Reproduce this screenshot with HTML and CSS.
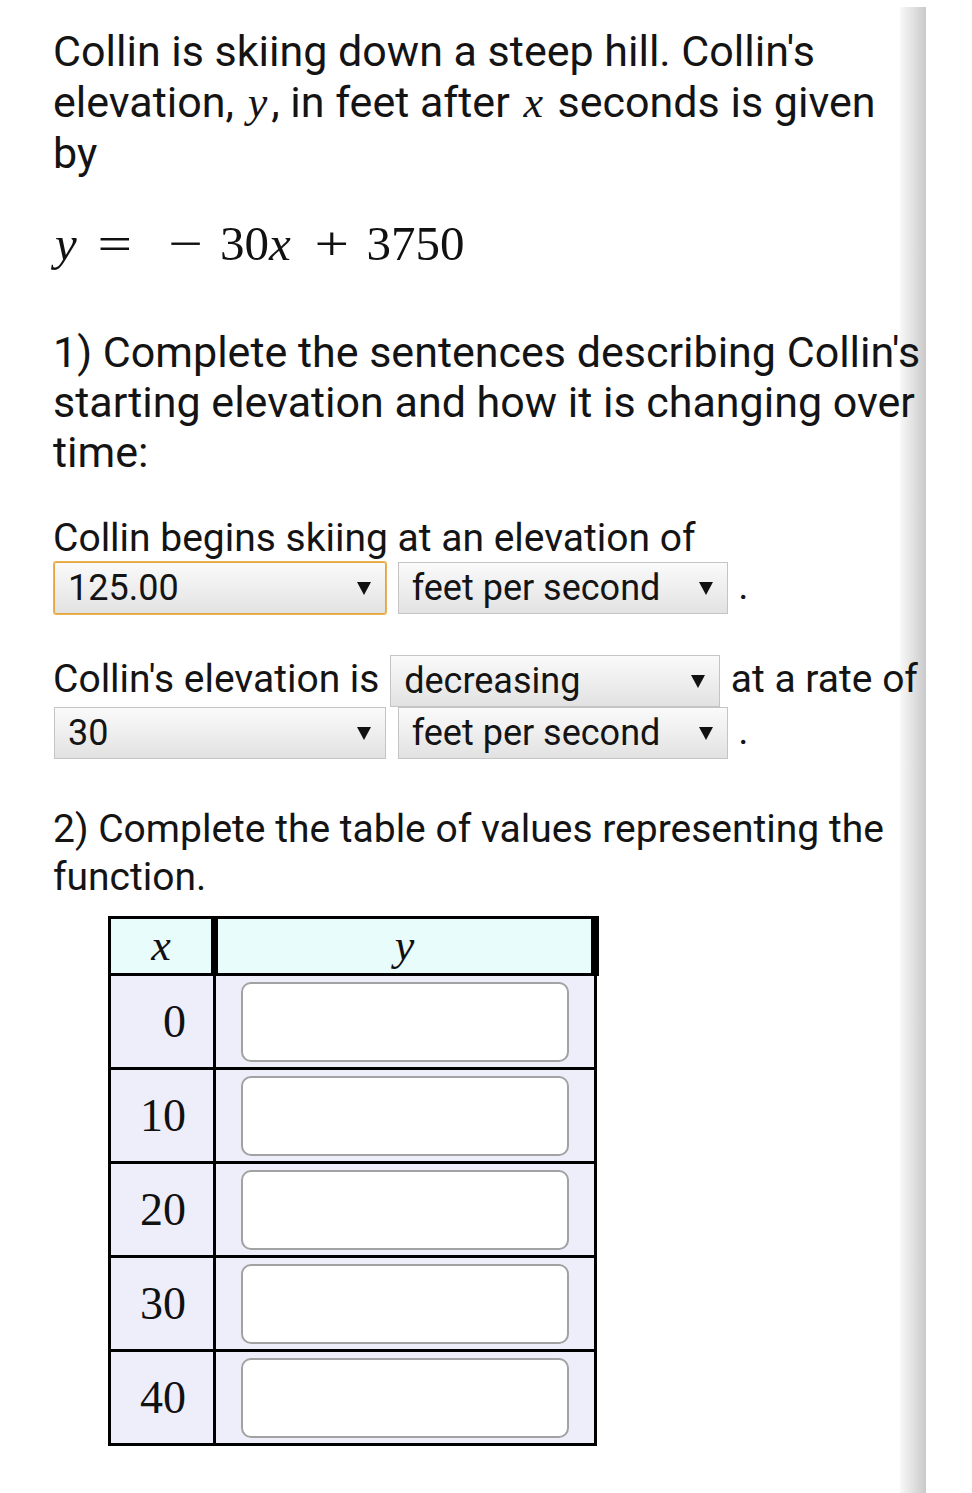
FILE: index.html
```html
<!DOCTYPE html>
<html lang="en">
<head>
<meta charset="utf-8">
<title>Collin skiing</title>
<link rel="stylesheet" href="styles.css">
</head>
<body>
<div class="edge-shade"></div>
<main class="content">
  <p class="prose large intro">Collin is skiing down a steep hill. Collin's<br>elevation, <span class="mi-inline">y</span>, in feet after <span class="mi-inline">x</span> seconds is given<br>by</p>

  <div class="equation">
    <span class="mi eq-y">y</span><span class="op eq-eq">=</span><span class="op eq-minus">−</span><span class="eq-term">30<span class="mi">x</span></span><span class="op eq-plus">+</span><span class="eq-const">3750</span>
  </div>

  <p class="prose large part">1) Complete the sentences describing Collin's starting elevation and how it is changing over time:</p>

  <p class="prose small sentence first">Collin begins skiing at an elevation of <span class="select select--wide select--focus"><span class="select-text">125.00</span><svg class="caret" viewBox="0 0 14 13"><polygon points="0,0 14,0 7,13"/></svg></span> <span class="select"><span class="select-text">feet per second</span><svg class="caret" viewBox="0 0 14 13"><polygon points="0,0 14,0 7,13"/></svg></span> .</p>

  <p class="prose small sentence second">Collin's elevation is <span class="select"><span class="select-text">decreasing</span><svg class="caret" viewBox="0 0 14 13"><polygon points="0,0 14,0 7,13"/></svg></span> at a rate of <span class="select select--wide"><span class="select-text">30</span><svg class="caret" viewBox="0 0 14 13"><polygon points="0,0 14,0 7,13"/></svg></span> <span class="select"><span class="select-text">feet per second</span><svg class="caret" viewBox="0 0 14 13"><polygon points="0,0 14,0 7,13"/></svg></span> .</p>

  <p class="prose small table-intro">2) Complete the table of values representing the function.</p>

  <table class="values">
    <thead>
      <tr><th class="col-x"><span class="mi">x</span></th><th class="col-y"><span class="mi">y</span></th></tr>
    </thead>
    <tbody>
      <tr><td class="num">0</td><td class="answer-cell"><div class="answer"></div></td></tr>
      <tr><td class="num">10</td><td class="answer-cell"><div class="answer"></div></td></tr>
      <tr><td class="num">20</td><td class="answer-cell"><div class="answer"></div></td></tr>
      <tr><td class="num">30</td><td class="answer-cell"><div class="answer"></div></td></tr>
      <tr><td class="num">40</td><td class="answer-cell"><div class="answer"></div></td></tr>
    </tbody>
  </table>
</main>
</body>
</html>
```

FILE: styles.css
```css
html, body {
  margin: 0;
  padding: 0;
  background: #ffffff;
}

body {
  font-family: Roboto, "Liberation Sans", Arial, sans-serif;
  color: #141414;
  position: relative;
  min-height: 1493px;
}

.edge-shade {
  position: absolute;
  left: 900px;
  top: 7px;
  width: 26px;
  height: 1486px;
  background: linear-gradient(to right, #f8f8f8 0%, #e6e6e6 40%, #c9c9c9 100%);
  z-index: 0;
}

.content {
  position: relative;
  z-index: 1;
  padding: 26px 0 0 53px;
  width: 880px;
}

.prose {
  margin: 0;
}

.prose.large {
  font-size: 43px;
  line-height: 50px;
}

.prose.intro {
  line-height: 51px;
}

.prose.small {
  font-size: 39px;
  line-height: 48px;
}

.mi-inline {
  display: inline-block;
  margin: 0 4px 0 3px;
  font-family: "Liberation Serif", "Times New Roman", serif;
  font-style: italic;
  font-size: 44px;
  line-height: 40px;
}

.mi {
  font-family: "Liberation Serif", "Times New Roman", serif;
  font-style: italic;
}

/* Equation */
.equation {
  display: flex;
  align-items: baseline;
  margin-top: 35px;
  font-family: "Liberation Serif", "Times New Roman", serif;
  font-size: 49px;
  line-height: 60px;
  color: #111;
  padding-left: 2px;
}

.op {
  display: inline-block;
  transform: scaleX(1.25);
}

.eq-eq { margin-left: 24px; }
.eq-minus { margin-left: 44px; }
.eq-term { margin-left: 20px; }
.eq-plus { margin-left: 27px; }
.eq-const { margin-left: 21px; }

.part {
  margin-top: 53px;
}

.sentence.first {
  margin-top: 37px;
}

.sentence.second {
  margin-top: 41px;
}

.table-intro {
  margin-top: 46px;
  line-height: 46px;
}

/* Select boxes */
.select {
  display: inline-flex;
  align-items: center;
  justify-content: space-between;
  box-sizing: border-box;
  width: 330px;
  height: 52px;
  padding: 0 14px 0 13px;
  margin: 0 1px;
  vertical-align: top;
  border: 1px solid #c4c4c4;
  background: linear-gradient(to bottom, #fafafa 0%, #ececec 60%, #e2e2e2 100%);
  font-size: 36px;
  line-height: 1;
  color: #141414;
}

.select--wide {
  width: 332px;
}

.select--focus {
  border-color: #e2a540;
  box-shadow: 0 0 0 1px #eab457;
  border-radius: 2px;
}

.select-text {
  white-space: nowrap;
}

.caret {
  width: 14px;
  height: 13px;
  fill: #111;
  flex: none;
}

/* Table */
.values {
  margin: 15px 0 0 55px;
  border-collapse: collapse;
  table-layout: fixed;
  width: 491px;
  font-family: "Liberation Serif", "Times New Roman", serif;
  font-size: 46px;
  color: #111;
}

.values th {
  background: #e9fcfc;
  height: 54px;
  padding: 0;
  border: 3px solid #000;
  font-weight: normal;
  text-align: center;
  font-size: 44px;
  line-height: 1;
}

.values th.col-x {
  width: 100px;
}

.values th.col-y {
  border-left-width: 7px;
  border-right-width: 8px;
}

.values td {
  background: #eeeefa;
  border: 3px solid #000;
  padding: 0;
  height: 91px;
}

.values td.num {
  text-align: right;
  padding-right: 27px;
  line-height: 1;
}

.values td.answer-cell {
  text-align: center;
}

.answer {
  box-sizing: border-box;
  width: 328px;
  height: 80px;
  margin: 0 auto;
  background: #ffffff;
  border: 2px solid #a2a2a2;
  border-radius: 10px;
}
```
